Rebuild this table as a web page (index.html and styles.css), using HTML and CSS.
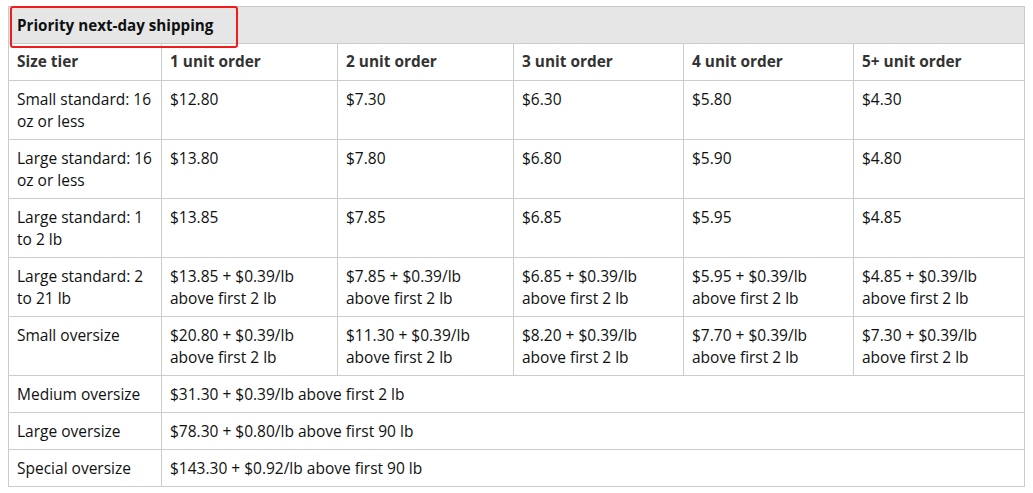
FILE: index.html
```html
<!DOCTYPE html>
<html>
<head>
<meta charset="utf-8">
<link rel="stylesheet" href="styles.css">
</head>
<body>
<div class="wrap">
  <table class="rates">
    <colgroup>
      <col class="c1"><col class="c2"><col class="c3"><col class="c4"><col class="c5"><col class="c6">
    </colgroup>
    <thead>
      <tr class="title-row"><th colspan="6">Priority next-day shipping</th></tr>
      <tr class="head-row">
        <th>Size tier</th><th>1 unit order</th><th>2 unit order</th><th>3 unit order</th><th>4 unit order</th><th>5+ unit order</th>
      </tr>
    </thead>
    <tbody>
      <tr><td>Small standard: 16 oz or less</td><td>$12.80</td><td>$7.30</td><td>$6.30</td><td>$5.80</td><td>$4.30</td></tr>
      <tr><td>Large standard: 16 oz or less</td><td>$13.80</td><td>$7.80</td><td>$6.80</td><td>$5.90</td><td>$4.80</td></tr>
      <tr><td>Large standard: 1 to 2 lb</td><td>$13.85</td><td>$7.85</td><td>$6.85</td><td>$5.95</td><td>$4.85</td></tr>
      <tr><td>Large standard: 2 to 21 lb</td><td>$13.85 + $0.39/lb above first 2 lb</td><td>$7.85 + $0.39/lb above first 2 lb</td><td>$6.85 + $0.39/lb above first 2 lb</td><td>$5.95 + $0.39/lb above first 2 lb</td><td>$4.85 + $0.39/lb above first 2 lb</td></tr>
      <tr><td>Small oversize</td><td>$20.80 + $0.39/lb above first 2 lb</td><td>$11.30 + $0.39/lb above first 2 lb</td><td>$8.20 + $0.39/lb above first 2 lb</td><td>$7.70 + $0.39/lb above first 2 lb</td><td>$7.30 + $0.39/lb above first 2 lb</td></tr>
      <tr><td>Medium oversize</td><td colspan="5">$31.30 + $0.39/lb above first 2 lb</td></tr>
      <tr><td>Large oversize</td><td colspan="5">$78.30 + $0.80/lb above first 90 lb</td></tr>
      <tr><td>Special oversize</td><td colspan="5">$143.30 + $0.92/lb above first 90 lb</td></tr>
    </tbody>
  </table>
  <div class="highlight"></div>
</div>
</body>
</html>
```

FILE: styles.css
```css
html, body {
  margin: 0;
  padding: 0;
  background: #ffffff;
}
body {
  padding: 6px 0 0 8px;
  font-family: "Segoe UI", "Open Sans", "Noto Sans", sans-serif;
  font-size: 15.5px;
  color: #0f1111;
}
.wrap {
  position: relative;
  width: 1016px;
}
.rates {
  width: 1016px;
  table-layout: fixed;
  border-collapse: collapse;
  border: 1px solid #cccccc;
}
.c1 { width: 153px; }
.c2 { width: 176px; }
.c3 { width: 176px; }
.c4 { width: 170px; }
.c5 { width: 170px; }
.c6 { width: 171px; }
.rates th,
.rates td {
  border: 1px solid #cccccc;
  padding: 7px 8px;
  line-height: 22px;
  text-align: left;
  vertical-align: top;
}
.title-row th {
  background: #e6e6e6;
  color: #0f1111;
  font-weight: 700;
  font-size: 15.2px;
}
.head-row th {
  color: #333333;
  font-weight: 700;
  font-size: 15.4px;
}
.rates td {
  font-weight: 400;
}
.highlight {
  position: absolute;
  left: 2px;
  top: 0;
  width: 224px;
  height: 38px;
  border: 2px solid #f01c1c;
  border-radius: 3px;
}
```
